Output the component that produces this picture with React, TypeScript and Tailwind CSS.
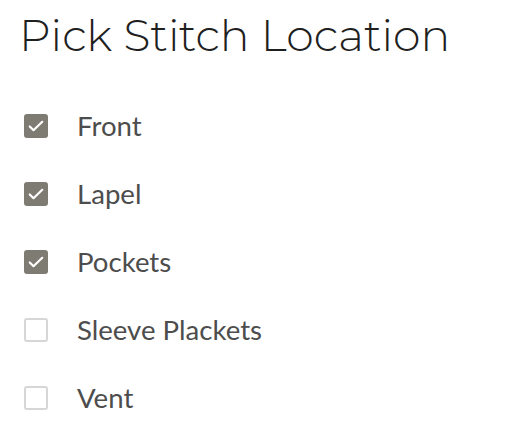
import { useState } from 'react';

const options = [
  { label: 'Front', checked: true },
  { label: 'Lapel', checked: true },
  { label: 'Pockets', checked: true },
  { label: 'Sleeve Plackets', checked: false },
  { label: 'Vent', checked: false },
];

export default function App() {
  const [items, setItems] = useState(options);

  const toggle = (i: number) => {
    setItems(items.map((item, idx) => (idx === i ? { ...item, checked: !item.checked } : item)));
  };

  return (
    <div className="min-h-screen bg-white pl-[19px] pt-[6px]">
      <h1 className="font-['Montserrat','Inter',sans-serif] text-[44.2px] font-light leading-[58px] text-[#1f1f1f]">
        Pick Stitch Location
      </h1>

      {/* options */}
      <div className="mt-[44px] flex flex-col gap-[32px] pl-[5px]">
        {items.map((item, i) => (
          <label
            key={item.label}
            onClick={() => toggle(i)}
            className="flex h-[36px] cursor-pointer items-center gap-[29px]"
          >
            {item.checked ? (
              <span className="flex h-[24px] w-[24px] shrink-0 items-center justify-center rounded-[3px] bg-[#7e7b73]">
                <svg width="20" height="20" viewBox="0 0 24 24" fill="none" stroke="white" strokeWidth="2.6" strokeLinecap="round" strokeLinejoin="round">
                  <path d="M4.5 12.5l4.5 4.5L19.5 7" />
                </svg>
              </span>
            ) : (
              <span className="h-[24px] w-[24px] shrink-0 rounded-[3px] border-2 border-[#d6d6d6] bg-white" />
            )}
            <span className="font-['Lato',sans-serif] text-[27.6px] text-[#4d4d4d]">{item.label}</span>
          </label>
        ))}
      </div>
    </div>
  );
}
